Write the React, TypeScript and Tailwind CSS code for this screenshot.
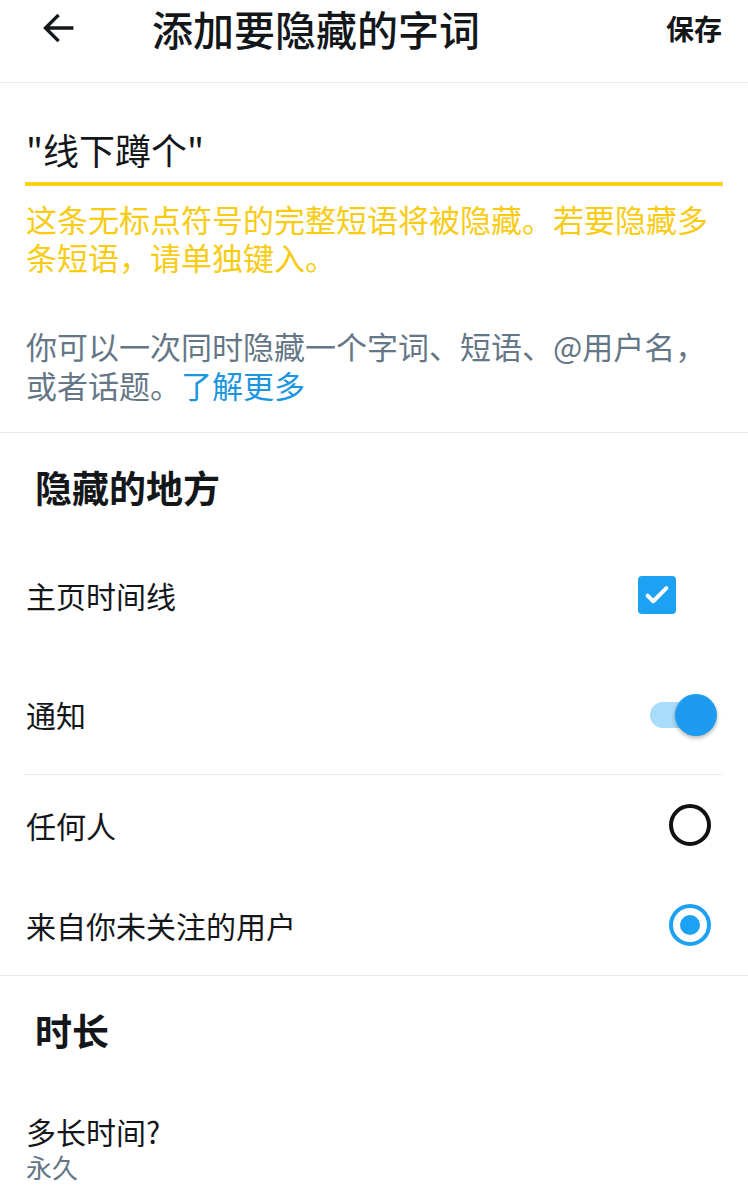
import React from "react";

const font = { fontFamily: '"Noto Sans CJK SC", "Noto Sans", sans-serif' };

function Checkbox() {
  return (
    <div className="w-[38px] h-[38px] rounded-[4px] bg-[#1DA1F2] flex items-center justify-center">
      <svg width="30" height="30" viewBox="0 0 24 24" fill="none">
        <path d="M4.5 12.5l4.5 4.5L19.5 6.5" stroke="white" strokeWidth="3.2" strokeLinecap="round" strokeLinejoin="round" />
      </svg>
    </div>
  );
}

function Toggle() {
  return (
    <div className="relative w-[68px] h-[42px]">
      <div className="absolute left-[1px] top-[8px] w-[58px] h-[26px] rounded-full bg-[#A9DCFA]" />
      <div className="absolute right-0 top-0 w-[42px] h-[42px] rounded-full bg-[#1D9BF0] shadow-[0_2px_4px_rgba(0,0,0,0.3)]" />
    </div>
  );
}

function Radio({ checked }: { checked?: boolean }) {
  if (checked) {
    return (
      <div className="w-[42px] h-[42px] rounded-full border-[4px] border-[#1DA1F2] flex items-center justify-center">
        <div className="w-[20px] h-[20px] rounded-full bg-[#1DA1F2]" />
      </div>
    );
  }
  return <div className="w-[42px] h-[42px] rounded-full border-[4px] border-[#111]" />;
}

export default function App() {
  return (
    <div className="w-[748px] h-[1200px] bg-white text-[#14171A] overflow-hidden" style={font}>
      {/* Header */}
      <div className="h-[83px] border-b border-[#E6ECF0]">
        <div className="h-[56px] flex items-center">
          <div className="w-[152px] flex items-center pl-[40px]">
            <svg width="38" height="38" viewBox="0 0 24 24" fill="none">
              <path d="M20 12H4.5M11 4.5L3.5 12l7.5 7.5" stroke="#14171A" strokeWidth="2.2" strokeLinecap="square" />
            </svg>
          </div>
          <div className="flex-1 text-[41px] leading-[56px] font-medium whitespace-nowrap">添加要隐藏的字词</div>
          <div className="pr-[26px] text-[28px] leading-[56px] font-bold">保存</div>
        </div>
      </div>

      {/* Input section */}
      <div className="border-b border-[#E6ECF0] px-[25px] pt-[44px] pb-[28px]">
        <div className="pl-[1px] text-[36px] leading-[44px]">"线下蹲个"</div>
        <div className="mt-[11px] h-[4px] bg-[#FCD116]" />
        <div className="mt-[14px] pl-[1px] text-[31px] leading-[38px] text-[#F9CB12] whitespace-nowrap">
          这条无标点符号的完整短语将被隐藏。若要隐藏多
          <br />
          条短语，请单独键入。
        </div>
        <div className="mt-[50px] pl-[1px] text-[31px] leading-[39px] text-[#657786] whitespace-nowrap">
          你可以一次同时隐藏一个字词、短语、@用户名，
          <br />
          或者话题。<span className="text-[#1B95E0]">了解更多</span>
        </div>
      </div>

      {/* Where to hide */}
      <div className="border-b border-[#E6ECF0]">
        <div className="pl-[35px] pt-[32px] text-[37px] leading-[44px] font-bold">隐藏的地方</div>
        <div className="mt-[26px] h-[120px] flex items-center justify-between pl-[26px] pr-[72px]">
          <span className="text-[30px]">主页时间线</span>
          <Checkbox />
        </div>
        <div className="mx-[25px] h-[120px] flex items-center justify-between pl-[1px] pr-[6px] border-b border-[#E6ECF0]">
          <span className="text-[30px]">通知</span>
          <Toggle />
        </div>
        <div className="h-[100px] flex items-center justify-between pl-[26px] pr-[37px]">
          <span className="text-[30px]">任何人</span>
          <Radio />
        </div>
        <div className="h-[100px] flex items-center justify-between pl-[26px] pr-[37px]">
          <span className="text-[30px]">来自你未关注的用户</span>
          <Radio checked />
        </div>
      </div>

      {/* Duration */}
      <div>
        <div className="pl-[35px] pt-[32px] text-[37px] leading-[44px] font-bold">时长</div>
        <div className="mt-[59px] pl-[26px] text-[30px] leading-[40px]">多长时间?</div>
        <div className="pl-[26px] text-[26px] leading-[32px] text-[#657786]">永久</div>
      </div>
    </div>
  );
}
